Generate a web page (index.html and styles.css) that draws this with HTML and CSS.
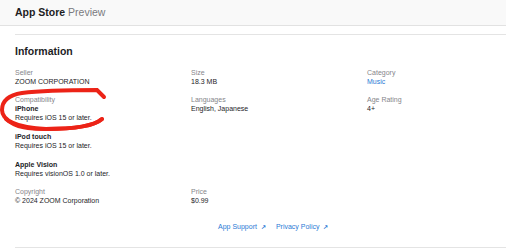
FILE: index.html
```html
<!DOCTYPE html>
<html lang="en">
<head>
<meta charset="UTF-8">
<meta name="viewport" content="width=device-width, initial-scale=1.0">
<title>App Store Preview</title>
<link rel="stylesheet" href="styles.css">
</head>
<body>
<header class="topbar">
  <span class="brand">App Store</span> <span class="brand-sub">Preview</span>
</header>

<section class="info">
  <h2>Information</h2>
  <dl class="grid">
    <div class="item">
      <dt>Seller</dt>
      <dd>ZOOM CORPORATION</dd>
    </div>
    <div class="item">
      <dt>Size</dt>
      <dd>18.3 MB</dd>
    </div>
    <div class="item">
      <dt>Category</dt>
      <dd><a href="#">Music</a></dd>
    </div>
    <div class="item">
      <dt>Compatibility</dt>
      <dd>
        <div class="device">
          <b>iPhone</b>
          <span>Requires iOS 15 or later.</span>
        </div>
        <div class="device">
          <b>iPod touch</b>
          <span>Requires iOS 15 or later.</span>
        </div>
        <div class="device">
          <b>Apple Vision</b>
          <span>Requires visionOS 1.0 or later.</span>
        </div>
      </dd>
    </div>
    <div class="item">
      <dt>Languages</dt>
      <dd>English, Japanese</dd>
    </div>
    <div class="item">
      <dt>Age Rating</dt>
      <dd>4+</dd>
    </div>
    <div class="item">
      <dt>Copyright</dt>
      <dd>&copy; 2024 ZOOM Corporation</dd>
    </div>
    <div class="item">
      <dt>Price</dt>
      <dd>$0.99</dd>
    </div>
  </dl>

  <div class="links">
    <a href="#">App Support <span class="arrow">&#8599;</span></a>
    <a href="#">Privacy Policy <span class="arrow">&#8599;</span></a>
  </div>

  <!-- red marker circled over the screenshot -->
  <svg class="scribble" width="112" height="52" viewBox="0 0 112 52">
    <path d="M104 12 L97 5 C 80 5, 45 5, 22 8 C 9 10, 2 16, 2 25 C 2 35, 16 43, 46 44 C 74 44, 94 41, 102 34" />
    <path class="low" d="M6 34 C 16 43, 30 44, 46 44 C 74 44, 94 41, 102 34" />
  </svg>
</section>
</body>
</html>
```

FILE: styles.css
```css
body {
  margin: 0;
  font-family: "Liberation Sans", Arial, sans-serif;
  color: #1d1d1f;
  background-color: #fff;
  overflow: hidden;
}
.topbar {
  height: 25px;
  line-height: 25px;
  padding-left: 15px;
  font-size: 10.5px;
  background-color: #f9f9f9;
  border-bottom: 1px solid #e2e2e2;
}
.brand { font-weight: bold; }
.brand-sub { color: #7a7a7e; }
.info {
  position: relative;
  margin: 8px 0 0 15px;
  border-top: 1px solid #e4e4e4;
  border-bottom: 1px solid #e4e4e4;
  padding-bottom: 17px;
}
h2 {
  margin: 9px 0 0;
  font-size: 10.5px;
  line-height: 14px;
}
.grid {
  display: grid;
  grid-template-columns: 176px 176px 1fr;
  row-gap: 9px;
  margin: 10px 0 0;
  font-size: 7px;
  line-height: 9px;
}
dt { color: #86868b; }
dd { margin: 0; }
dd a { color: #2a7ad5; text-decoration: none; }
.device { display: flex; flex-direction: column; margin-bottom: 10px; }
.device:last-child { margin-bottom: 0; }
.device b { font-weight: bold; }
.scribble {
  position: absolute;
  left: -15px;
  top: 50px;
  overflow: visible;
  fill: none;
  stroke: #ec2317;
  stroke-width: 4;
  stroke-linecap: round;
  stroke-linejoin: miter;
}
.links {
  display: flex;
  gap: 10px;
  margin: 18px 0 0 203px;
  font-size: 7px;
}
.links a { color: #2a7ad5; text-decoration: none; }
.arrow { font-size: 6px; margin-left: 2px; font-weight: bold; }
```
